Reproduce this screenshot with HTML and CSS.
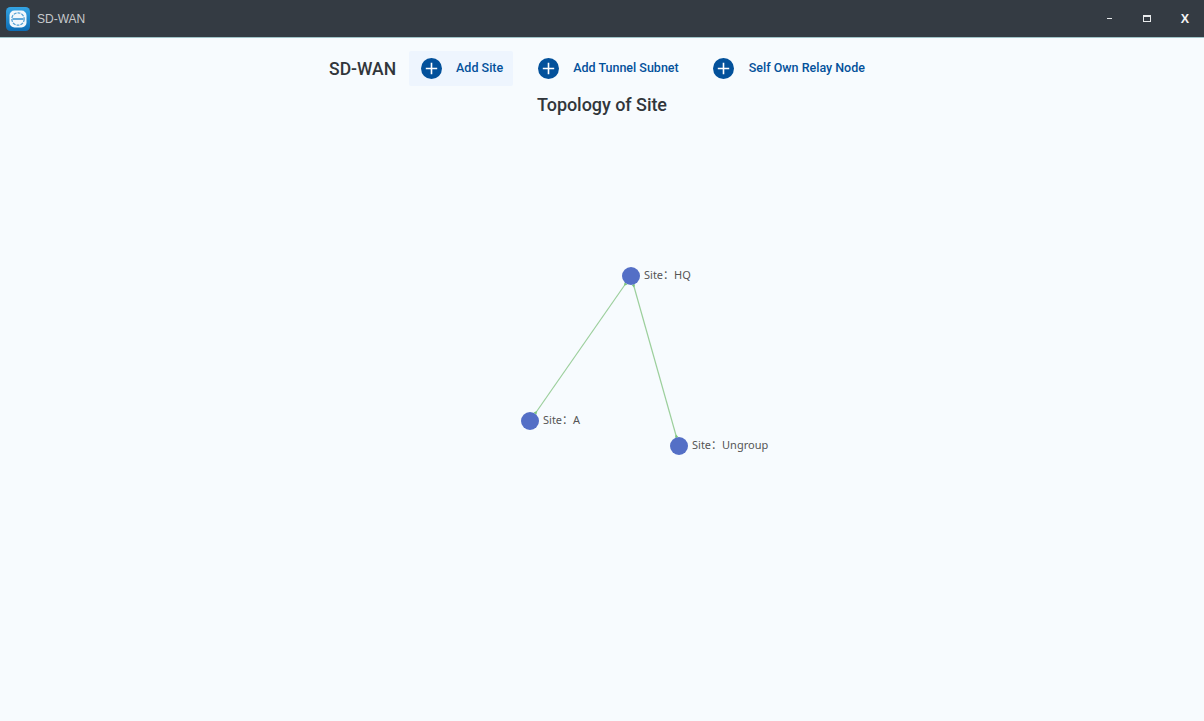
FILE: index.html
```html
<!DOCTYPE html>
<html lang="en">
<head>
<meta charset="utf-8">
<title>SD-WAN</title>
<link rel="stylesheet" href="styles.css">
</head>
<body>
<header class="titlebar">
  <div class="app">
    <svg class="logo" width="24" height="24" viewBox="0 0 24 24">
      <defs><linearGradient id="lg" x1="0" y1="0" x2="0" y2="1"><stop offset="0" stop-color="#34a4e4"/><stop offset="1" stop-color="#0c6cb4"/></linearGradient></defs>
      <rect width="24" height="24" rx="4.5" fill="url(#lg)"/>
      <rect x="3.5" y="3.5" width="17" height="17" rx="5" fill="#f2f8fc"/>
      <circle cx="12" cy="12" r="6.2" fill="none" stroke="#4f9fd4" stroke-width="1.2" stroke-dasharray="3 1"/>
      <path d="M6.5 12h11" stroke="#3d93cf" stroke-width="1.6"/>
    </svg>
    <span class="app-name">SD-WAN</span>
  </div>
  <div class="controls">
    <span class="ctl ctl-min"></span>
    <span class="ctl ctl-max"></span>
    <span class="ctl-close">X</span>
  </div>
</header>
<main class="content">
  <nav class="toolbar">
    <h1 class="brand">SD-WAN</h1>
    <a class="tool tool-active">
      <svg class="plus" width="21" height="21" viewBox="0 0 21 21"><circle cx="10.5" cy="10.5" r="10.5" fill="#03519b"/><path d="M10.5 4.8v11.4M4.8 10.5h11.4" stroke="#fff" stroke-width="1.6"/></svg>
      <span>Add Site</span>
    </a>
    <a class="tool">
      <svg class="plus" width="21" height="21" viewBox="0 0 21 21"><circle cx="10.5" cy="10.5" r="10.5" fill="#03519b"/><path d="M10.5 4.8v11.4M4.8 10.5h11.4" stroke="#fff" stroke-width="1.6"/></svg>
      <span>Add Tunnel Subnet</span>
    </a>
    <a class="tool tool-last">
      <svg class="plus" width="21" height="21" viewBox="0 0 21 21"><circle cx="10.5" cy="10.5" r="10.5" fill="#03519b"/><path d="M10.5 4.8v11.4M4.8 10.5h11.4" stroke="#fff" stroke-width="1.6"/></svg>
      <span>Self Own Relay Node</span>
    </a>
  </nav>
  <h2 class="heading">Topology of Site</h2>
  <svg class="graph" width="1204" height="604" viewBox="0 117 1204 604">
    <g class="edges">
      <line x1="631" y1="276" x2="530" y2="421"/>
      <line x1="631" y1="276" x2="679" y2="446"/>
    </g>
    <g class="arrows">
      <polygon points="627.4,284.4 624.4,282.4 624.2,285.8"/>
      <polygon points="635.1,284.2 631.7,285.2 634.2,287.6"/>
      <polygon points="536.6,414.6 533.6,412.6 536.8,411.1"/>
      <polygon points="678.3,436.8 674.9,437.8 675.8,434.4"/>
    </g>
    <g class="nodes">
      <circle cx="631" cy="276" r="9"/>
      <circle cx="530" cy="421" r="9"/>
      <circle cx="679" cy="446" r="9"/>
    </g>
    <g class="labels">
      <text x="644" y="279">Site：HQ</text>
      <text x="543" y="424">Site：A</text>
      <text x="692" y="449">Site：Ungroup</text>
    </g>
  </svg>
</main>
</body>
</html>
```
FILE: styles.css
```css
html, body {
  margin: 0;
  padding: 0;
  height: 100%;
  overflow: hidden;
}
body {
  display: flex;
  flex-direction: column;
  background: #f7fbfe;
  font-family: Roboto, "Liberation Sans", sans-serif;
}
.titlebar {
  flex: none;
  height: 37px;
  display: flex;
  align-items: center;
  justify-content: space-between;
  background: #343b43;
  border-bottom: 1px solid #9fc4c8;
}
.app {
  display: flex;
  align-items: center;
  gap: 7px;
  padding-left: 6px;
}
.logo { display: block; }
.app-name {
  font-family: "Liberation Sans", Arial, sans-serif;
  font-size: 12px;
  color: #c6c9cc;
}
.controls {
  display: flex;
  align-items: center;
  padding-right: 15px;
}
.ctl {
  display: block;
  box-sizing: border-box;
}
.ctl-min {
  width: 5px;
  height: 1px;
  margin-right: 31px;
  background: #e8eaec;
}
.ctl-max {
  width: 8px;
  height: 7px;
  margin-right: 30px;
  border: 1px solid #e8eaec;
  border-top-width: 2px;
}
.ctl-close {
  font-family: "Liberation Sans", Arial, sans-serif;
  font-size: 12.5px;
  font-weight: 700;
  line-height: 16px;
  color: #f2f3f4;
}
.content {
  flex: 1;
  display: flex;
  flex-direction: column;
  align-items: center;
  min-height: 0;
}
.toolbar {
  display: flex;
  align-items: center;
  gap: 13px;
  height: 35px;
  margin-top: 13px;
}
.brand {
  margin: 0;
  font-size: 17.5px;
  font-weight: 500;
  color: #31363b;
}
.tool {
  display: flex;
  align-items: center;
  gap: 14px;
  height: 35px;
  padding: 0 10px 0 12px;
  border-radius: 2px;
  font-size: 12.5px;
  font-weight: 500;
  color: #03519b;
}
.tool span { margin-bottom: 2px; }
.tool-last {
  gap: 15px;
  margin-left: -1px;
}
.tool-active { background: #eef5fe; }
.plus { display: block; flex: none; }
.heading {
  margin: 7px 0 0;
  height: 24px;
  line-height: 24px;
  font-size: 18px;
  font-weight: 500;
  letter-spacing: -0.05px;
  color: #31363b;
}
.graph {
  display: block;
  flex: none;
}
.edges line {
  stroke: #9ccf9c;
  stroke-width: 1.2;
}
.arrows polygon { fill: #7cc47c; }
.nodes circle { fill: #546fc6; }
.labels text {
  font-family: "Noto Sans", "Noto Sans CJK SC", sans-serif;
  font-size: 11px;
  fill: #555;
}
```
